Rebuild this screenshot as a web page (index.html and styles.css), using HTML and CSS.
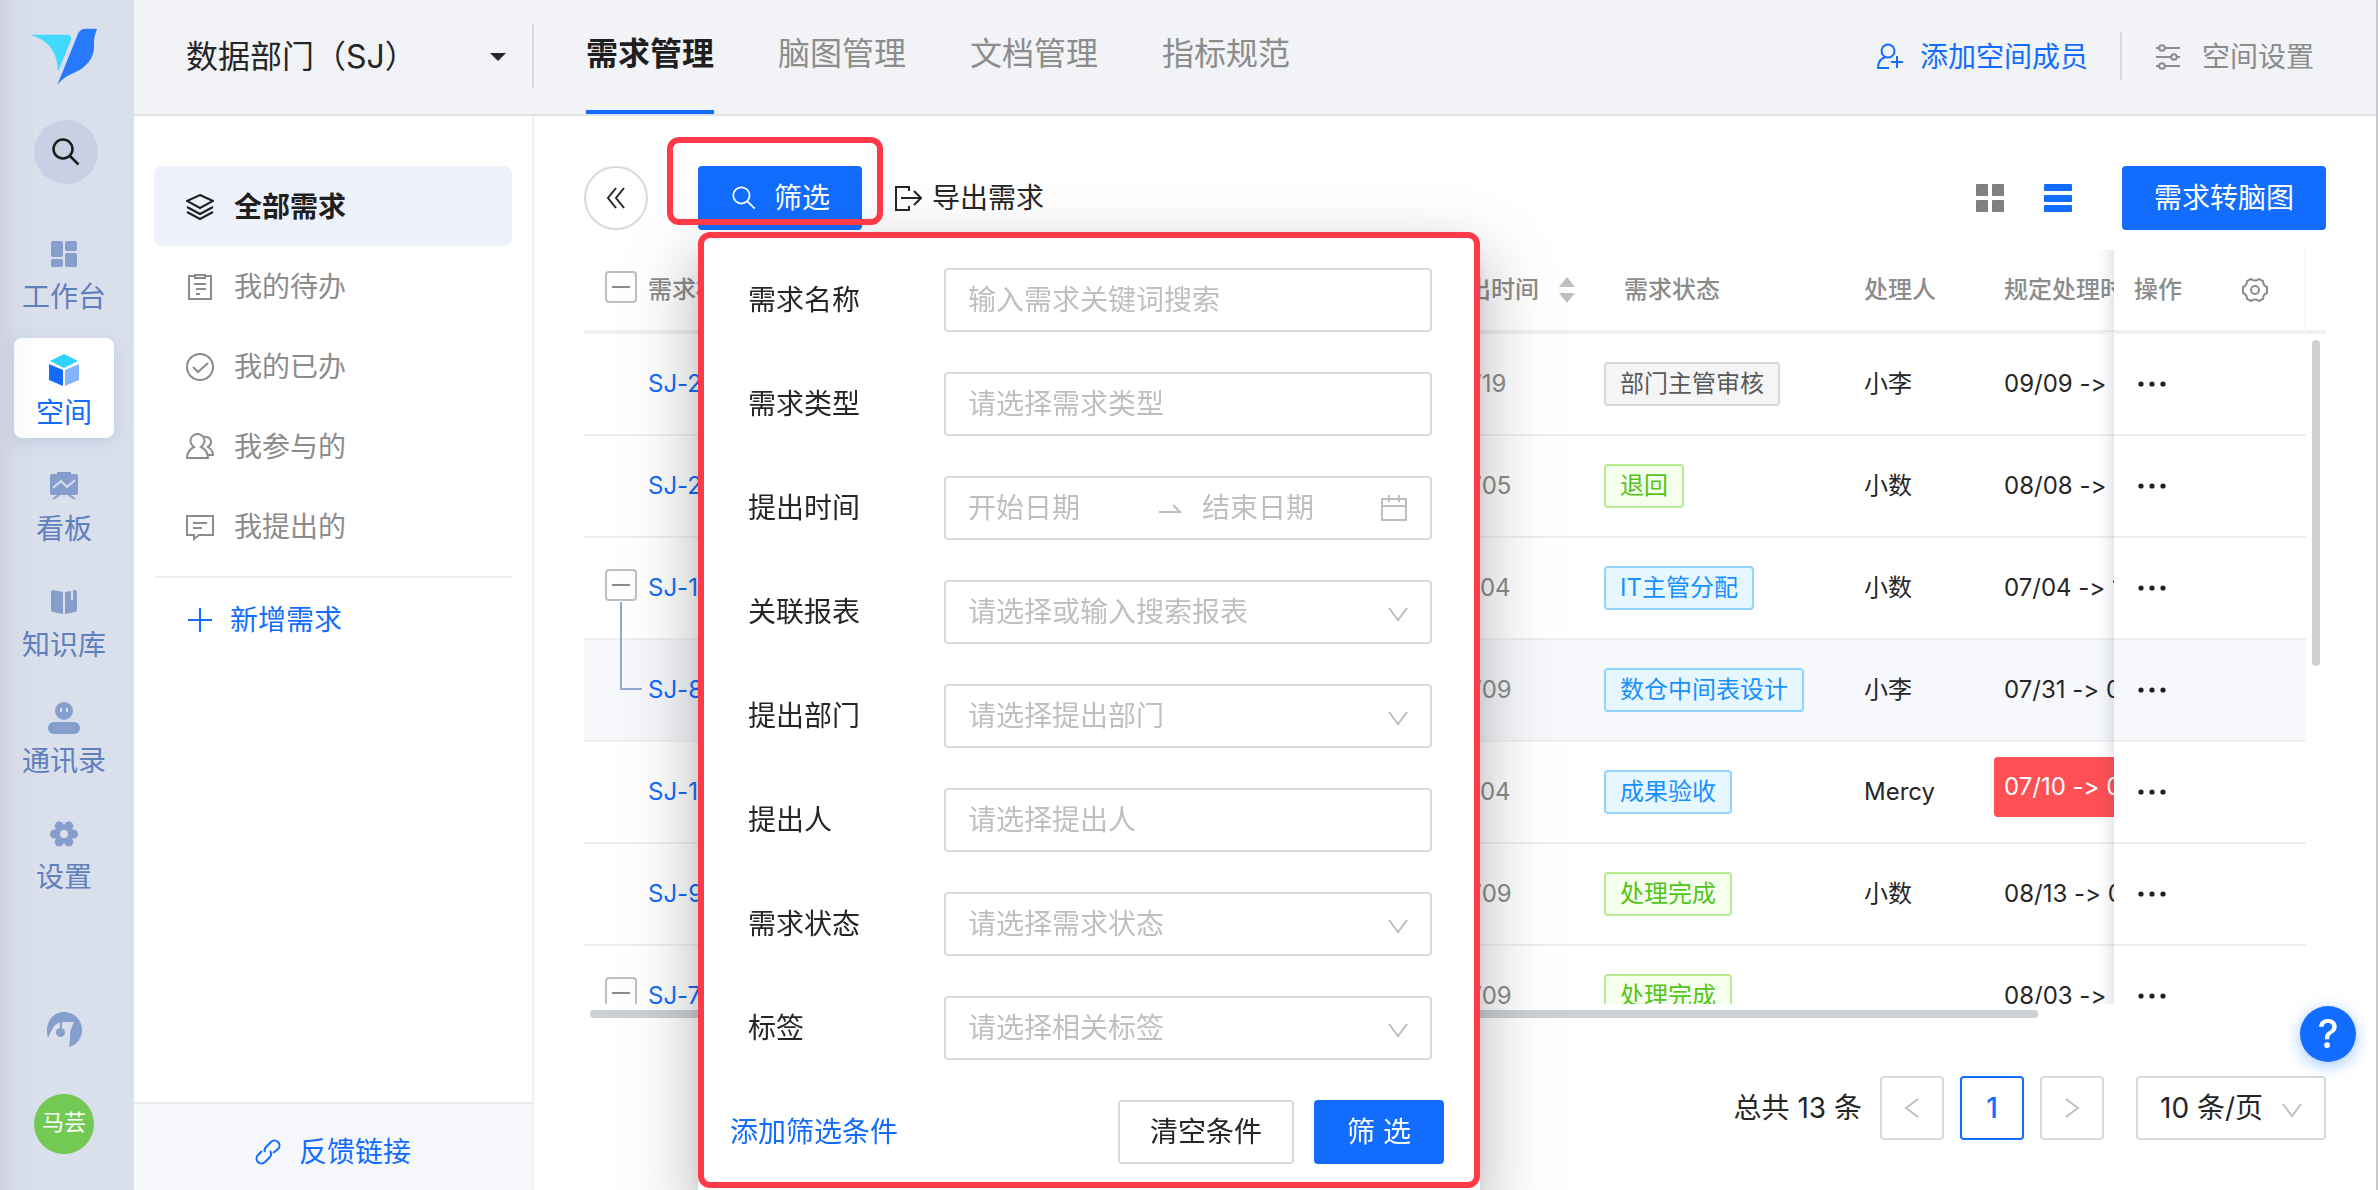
FILE: index.html
```html
<!DOCTYPE html>
<html lang="zh-CN">
<head>
<meta charset="utf-8">
<meta name="viewport" content="width=device-width, initial-scale=1">
<title>需求管理 - 数据部门（SJ）</title>
<link rel="stylesheet" href="styles.css">
</head>
<body>
<svg class="sprite" aria-hidden="true">
  <symbol id="i-chevron" viewBox="0 0 24 24"><path d="M3 6l9 12 9-12" fill="none" stroke="currentColor" stroke-width="2"/></symbol>
  <symbol id="i-search" viewBox="0 0 28 28"><g fill="none" stroke="currentColor"><circle cx="11" cy="11" r="9.500"/><path d="M18 18l8.500 8.500"/></g></symbol>
  <symbol id="i-dots" viewBox="0 0 28 8"><g fill="currentColor"><circle cx="3" cy="4" r="2.600"/><circle cx="14" cy="4" r="2.600"/><circle cx="25" cy="4" r="2.600"/></g></symbol>
</svg>
<div class="app">
  <aside class="rail">
    <svg class="logo" viewBox="0 0 70 58"><path d="M0 6h38c4 0 5 3 4 6L29 44C28 22 18 11 0 6z" fill="#41d9fe"/><path d="M69 0c-4 12-3 12-3 18 0 12-8 22-20 27-8 3-13 7-18 13L49 6c2-4 4-6 9-6z" fill="#277afe"/></svg>
    <button class="rail-search" aria-label="搜索"><svg width="28" height="28" stroke-width="2.500"><use href="#i-search"/></svg></button>
    <nav class="rail-nav">
      <a href="#"><svg viewBox="0 0 32 32"><g fill="currentColor"><rect x="3" y="3" width="12" height="16" rx="2"/><rect x="3" y="21" width="12" height="8" rx="2"/><rect x="17" y="3" width="12" height="10" rx="2"/><rect x="17" y="15" width="12" height="14" rx="2"/></g></svg><span>工作台</span></a>
      <a href="#" class="active"><svg viewBox="0 0 32 32"><path d="M16 0l14 7-14 7L2 7z" fill="#2fd3fe"/><path d="M1 10l14 6v16L1 26z" fill="#126dff"/><path d="M31 10l-14 6v16l14-6z" fill="#84b3ff"/></svg><span>空间</span></a>
      <a href="#"><svg viewBox="0 0 32 32"><path d="M4 4h5V2h14v2h5a2 2 0 0 1 2 2v17a2 2 0 0 1-2 2H4a2 2 0 0 1-2-2V6a2 2 0 0 1 2-2z" fill="currentColor"/><path d="M5 18l8-7 6 6 8-7" fill="none" stroke="#dadfec" stroke-width="2"/><path d="M11 25l-6 4M21 25l6 4" stroke="currentColor" stroke-width="2"/></svg><span>看板</span></a>
      <a href="#"><svg viewBox="0 0 32 32"><path d="M3 6c0-1 1-2 2-2l10 2v22L5 26c-1 0-2-1-2-2zM17 6l6-1v9h2V4l2 0c1 0 2 1 2 2v18c0 1-1 2-2 2l-10 2z" fill="currentColor"/></svg><span>知识库</span></a>
      <a href="#"><svg viewBox="0 0 32 32"><circle cx="16" cy="9" r="9" fill="currentColor"/><path d="M13 6v4M19 6v4" stroke="#dadfec" stroke-width="2"/><rect x="0" y="20" width="32" height="12" rx="6" fill="currentColor"/></svg><span>通讯录</span></a>
      <a href="#"><svg viewBox="0 0 32 32"><g fill="currentColor"><circle cx="6.500" cy="16" r="4.500"/><circle cx="25.500" cy="16" r="4.500"/><circle cx="11.200" cy="8" r="4.500"/><circle cx="20.800" cy="8" r="4.500"/><circle cx="11.200" cy="24" r="4.500"/><circle cx="20.800" cy="24" r="4.500"/><circle cx="16" cy="16" r="9.500"/></g><circle cx="16" cy="16" r="4" fill="#dadfec"/></svg><span>设置</span></a>
    </nav>
    <div class="rail-foot">
      <button class="support" aria-label="客服"><svg width="36" height="36" viewBox="0 0 36 36"><path d="M2 26C-2 12 6 0 18 0c10 0 18 8 18 18 0 8-5 15-13 17 1-5 1-7 1-11 0-6 2-9 4-14H17C8 10 6 18 2 26z" fill="currentColor"/><path d="M15 9v8" stroke="currentColor" stroke-width="2"/><circle cx="14.500" cy="20.500" r="4.500" fill="currentColor"/></svg></button>
      <button class="avatar">马芸</button>
    </div>
  </aside>

  <div class="shell">
    <header class="top">
      <button class="workspace"><span>数据部门（SJ）</span><svg width="16" height="8" viewBox="0 0 16 8"><path d="M0 0h16L8 8z" fill="currentColor"/></svg></button>
      <nav class="tabs">
        <a href="#" class="active">需求管理</a><a href="#">脑图管理</a><a href="#">文档管理</a><a href="#">指标规范</a>
      </nav>
      <div class="top-actions">
        <a href="#" class="add-member"><svg width="28" height="28" viewBox="0 0 28 28"><g fill="none" stroke="currentColor" stroke-width="2"><circle cx="12" cy="8" r="6.500"/><path d="M13 25H2c0-6 3-10 8-11M15 19h12M21 13v12"/></g></svg>添加空间成员</a>
        <a href="#" class="space-set"><svg width="28" height="28" viewBox="0 0 28 28"><g fill="none" stroke="currentColor" stroke-width="2"><path d="M2 5h3M11 5h15M2 14h15M23 14h3M2 23h3M11 23h15"/><circle cx="8" cy="5" r="2.800"/><circle cx="20" cy="14" r="2.800"/><circle cx="8" cy="23" r="2.800"/></g></svg>空间设置</a>
      </div>
    </header>

    <div class="body">
      <aside class="panel">
        <nav class="menu">
          <a href="#" class="active"><svg viewBox="0 0 28 28"><path d="M14 2l13 6-13 7L1 8zM1 14l13 7 13-7M1 19l13 7 13-7"/></svg>全部需求</a>
          <a href="#"><svg viewBox="0 0 28 28"><path d="M9 3H3v23h22V3h-6M9 2h10v3H9zM8 11h12M10 16h10M10 21h4"/></svg>我的待办</a>
          <a href="#"><svg viewBox="0 0 28 28"><circle cx="14" cy="14" r="13"/><path d="M7 14l5 5 10-9"/></svg>我的已办</a>
          <a href="#"><svg viewBox="0 0 28 28"><path d="M8 14a7 7 0 1 1 7 0c4 2 7 6 7 11H1c0-5 3-9 7-11zM17 4c4-1 8 1 8 5 0 2-1 4-3 5 3 2 5 5 5 8h-5"/></svg>我参与的</a>
          <a href="#"><svg viewBox="0 0 28 28"><path d="M1 3h26v19H13l-5 4v-4H1zM7 10h14M7 15h9"/></svg>我提出的</a>
        </nav>
        <button class="new-item"><svg width="28" height="28" viewBox="0 0 28 28"><path d="M14 2v24M2 14h24" stroke="currentColor" stroke-width="2"/></svg>新增需求</button>
        <a href="#" class="feedback"><svg width="26" height="26" viewBox="0 0 26 26"><g fill="none" stroke="currentColor" stroke-width="2"><path d="M10 13c-1-2 0-4 1-5l5-5c2-2 5-2 7 0s2 5 0 7l-5 4"/><path d="M15 12c2 2 1 5 0 6l-5 5c-2 2-5 2-7 0s-2-5 0-7l4-4"/></g></svg>反馈链接</a>
      </aside>

      <main class="main">
        <div class="toolbar">
          <button class="collapse" aria-label="收起"><svg width="20" height="24" viewBox="0 0 20 24"><path d="M10 2L2 12l8 10M18 2l-8 10 8 10" fill="none" stroke="currentColor" stroke-width="2"/></svg></button>
          <div class="filter">
            <button class="btn primary search-btn"><svg width="24" height="24" stroke-width="2"><use href="#i-search"/></svg>筛选</button>
            <div class="mark mark-button"></div>
            <form class="popup">
              <div class="field"><label for="f1">需求名称</label><input id="f1" class="ctl" placeholder="输入需求关键词搜索"></div>
              <div class="field"><label for="f2">需求类型</label><input id="f2" class="ctl" placeholder="请选择需求类型"></div>
              <div class="field"><label for="f3">提出时间</label><div class="ctl range"><input id="f3" placeholder="开始日期"><svg width="24" height="24" viewBox="0 0 24 24"><path d="M1 16h21l-7-7" fill="none" stroke="currentColor" stroke-width="2"/></svg><input aria-label="结束日期" placeholder="结束日期"><svg width="28" height="28" viewBox="0 0 28 28"><path d="M2 5h24v21H2zM2 12h24M9 1v7M19 1v7" fill="none" stroke="currentColor" stroke-width="2"/></svg></div></div>
              <div class="field"><label for="f4">关联报表</label><div class="pick"><select id="f4" class="ctl"><option>请选择或输入搜索报表</option></select><svg><use href="#i-chevron"/></svg></div></div>
              <div class="field"><label for="f5">提出部门</label><div class="pick"><select id="f5" class="ctl"><option>请选择提出部门</option></select><svg><use href="#i-chevron"/></svg></div></div>
              <div class="field"><label for="f6">提出人</label><input id="f6" class="ctl" placeholder="请选择提出人"></div>
              <div class="field"><label for="f7">需求状态</label><div class="pick"><select id="f7" class="ctl"><option>请选择需求状态</option></select><svg><use href="#i-chevron"/></svg></div></div>
              <div class="field"><label for="f8">标签</label><div class="pick"><select id="f8" class="ctl"><option>请选择相关标签</option></select><svg><use href="#i-chevron"/></svg></div></div>
              <div class="popup-foot"><a href="#">添加筛选条件</a><button type="reset" class="btn">清空条件</button><button type="submit" class="btn primary">筛 选</button></div>
              <div class="mark mark-popup"></div>
            </form>
          </div>
          <button class="export"><svg width="28" height="28" viewBox="0 0 28 28"><path d="M15 7V3H2v23h13v-4M7 14h19M20 7l7 7-7 7" fill="none" stroke="currentColor" stroke-width="2"/></svg>导出需求</button>
          <div class="views">
            <button aria-label="卡片视图"><svg width="28" height="28" viewBox="0 0 28 28"><g fill="currentColor"><rect width="12" height="12" rx="1"/><rect x="16" width="12" height="12" rx="1"/><rect y="16" width="12" height="12" rx="1"/><rect x="16" y="16" width="12" height="12" rx="1"/></g></svg></button>
            <button class="on" aria-label="列表视图"><svg width="28" height="28" viewBox="0 0 28 28"><g fill="currentColor"><rect width="28" height="7" rx="1"/><rect y="11" width="28" height="7" rx="1"/><rect y="21" width="28" height="7" rx="1"/></g></svg></button>
          </div>
          <button class="btn primary">需求转脑图</button>
        </div>

        <div class="table-area">
          <div class="viewport">
            <table>
              <colgroup><col><col class="c-date"><col class="c-state"><col class="c-user"><col class="c-due"><col class="c-act"></colgroup>
              <thead><tr>
                <th><div class="title"><button class="toggle" aria-label="全部收起"></button>需求标题</div></th>
                <th><div class="sort">提出时间<svg width="16" height="26" viewBox="0 0 16 26"><path d="M8 0l8 10H0zM8 26l8-10H0z" fill="#bfbfbf"/></svg></div></th>
                <th>需求状态</th><th>处理人</th><th>规定处理时间</th>
                <th class="act"><div class="act-head">操作<svg width="26" height="26" viewBox="0 0 26 26"><g fill="none" stroke="currentColor" stroke-width="2"><path d="M9 2c2 2 6 2 8 0l4 2c0 3 1 5 4 6v6c-3 1-4 3-4 6l-4 2c-2-2-6-2-8 0l-4-2c0-3-1-5-4-6v-6c3-1 4-3 4-6z"/><circle cx="13" cy="13" r="4"/></g></svg></div></th>
              </tr></thead>
              <tbody>
                <tr><td><div class="title"><a href="#">SJ-28</a></div></td><td class="date">08/19</td><td class="state"><span class="tag">部门主管审核</span></td><td>小李</td><td>09/09 -&gt; 09/16</td><td class="act"><button class="more" aria-label="更多"><svg><use href="#i-dots"/></svg></button></td></tr>
                <tr><td><div class="title"><a href="#">SJ-26</a></div></td><td class="date">08/05</td><td class="state"><span class="tag green">退回</span></td><td>小数</td><td>08/08 -&gt; 08/12</td><td class="act"><button class="more" aria-label="更多"><svg><use href="#i-dots"/></svg></button></td></tr>
                <tr><td><div class="title"><button class="toggle" aria-label="收起"></button><a href="#">SJ-12</a></div></td><td class="date">07/04</td><td class="state"><span class="tag blue">IT主管分配</span></td><td>小数</td><td>07/04 -&gt; 10/31</td><td class="act"><button class="more" aria-label="更多"><svg><use href="#i-dots"/></svg></button></td></tr>
                <tr class="hover"><td class="child"><div class="title"><a href="#">SJ-8</a></div></td><td class="date">06/09</td><td class="state"><span class="tag blue">数仓中间表设计</span></td><td>小李</td><td>07/31 -&gt; 08/05</td><td class="act"><button class="more" aria-label="更多"><svg><use href="#i-dots"/></svg></button></td></tr>
                <tr><td><div class="title"><a href="#">SJ-11</a></div></td><td class="date">07/04</td><td class="state"><span class="tag blue">成果验收</span></td><td>Mercy</td><td class="due"><span class="late">07/10 -&gt; 07/15</span></td><td class="act"><button class="more" aria-label="更多"><svg><use href="#i-dots"/></svg></button></td></tr>
                <tr><td><div class="title"><a href="#">SJ-9</a></div></td><td class="date">06/09</td><td class="state"><span class="tag green">处理完成</span></td><td>小数</td><td>08/13 -&gt; 08/20</td><td class="act"><button class="more" aria-label="更多"><svg><use href="#i-dots"/></svg></button></td></tr>
                <tr><td><div class="title"><button class="toggle" aria-label="收起"></button><a href="#">SJ-7</a></div></td><td class="date">06/09</td><td class="state"><span class="tag green">处理完成</span></td><td></td><td>08/03 -&gt; 08/10</td><td class="act"><button class="more" aria-label="更多"><svg><use href="#i-dots"/></svg></button></td></tr>
              </tbody>
            </table>
          </div>
          <div class="gutter"><div class="gutter-head"></div><div class="v-thumb"></div></div>
        </div>
        <div class="h-track"><div class="h-thumb"></div></div>

        <div class="pager">
          <span class="total">总共 13 条</span>
          <button aria-label="上一页" class="page"><svg class="left"><use href="#i-chevron"/></svg></button>
          <button class="page current">1</button>
          <button aria-label="下一页" class="page"><svg class="right"><use href="#i-chevron"/></svg></button>
          <div class="pick size"><select class="ctl" aria-label="每页条数"><option>10 条/页</option></select><svg><use href="#i-chevron"/></svg></div>
        </div>
      </main>
    </div>
  </div>
  <button class="help" aria-label="帮助">?</button>
</div>
</body>
</html>
```
FILE: styles.css
```css
* { box-sizing: border-box; }
body {
  margin: 0;
  font: 28px/40px Inter, "Noto Sans CJK SC", sans-serif;
  font-variant-ligatures: none;
  color: #262626;
  background: #fff;
}
a { color: inherit; text-decoration: none; }
button, input, select { font: inherit; color: inherit; margin: 0; padding: 0; border: 0; background: none; }
button { cursor: pointer; white-space: nowrap; }
svg { flex: none; display: block; }
.sprite { position: absolute; width: 0; height: 0; }

.app { display: flex; height: 100vh; border-right: 2px solid #c8c9cc; overflow: hidden; }

/* Icon rail */
.rail {
  display: flex; flex-direction: column; align-items: center; flex: none;
  width: 134px; padding: 28px 6px 36px 0;
  background: linear-gradient(90deg, #cfd3df, #d6dbe8 16px, #dadfec 36px);
}
.logo { width: 68px; height: 58px; }
.rail-search {
  display: flex; align-items: center; justify-content: center;
  width: 64px; height: 64px; margin: 34px 0 38px 4px;
  border-radius: 50%; background: #c8d1e4; color: #1a1a1a;
}
.rail-nav { display: flex; flex-direction: column; gap: 16px; }
.rail-nav a {
  display: flex; flex-direction: column; align-items: center; gap: 6px;
  width: 100px; height: 100px; padding-top: 16px; border-radius: 8px;
  color: #869ecb; white-space: nowrap;
}
.rail-nav svg { width: 32px; height: 32px; }
.rail-nav span { color: #5f80bd; line-height: 42px; }
.rail-nav .active { background: linear-gradient(90deg, #fafafb, #fff 24px); box-shadow: 0 4px 16px rgba(120, 150, 190, .25); }
.rail-nav .active span { color: #126dff; }
.rail-foot { display: flex; flex-direction: column; align-items: center; gap: 46px; margin-top: auto; }
.support { color: #869ecb; }
.avatar { width: 60px; height: 60px; border-radius: 50%; background: #72c953; color: #fff; font-size: 22px; line-height: 56px; padding-bottom: 4px; }

/* Header */
.shell { display: flex; flex-direction: column; flex: 1; min-width: 0; }
.top {
  display: flex; flex: none; height: 116px;
  background: #f1f3f7; border-bottom: 2px solid #e1e3e6;
}
.workspace {
  display: flex; align-items: center; justify-content: space-between; flex: none;
  width: 400px; height: 64px; margin-top: 24px; padding: 2px 26px 0 52px;
  border-right: 2px solid #d9dade; font-size: 32px;
}
.tabs { display: flex; gap: 64px; padding-left: 52px; }
.tabs a {
  height: 114px; line-height: 108px; border-bottom: 4px solid transparent;
  font-size: 32px; color: #8c8c8c;
}
.tabs .active { font-weight: 700; color: #1f1f1f; border-color: #126dff; }
.top-actions { display: flex; align-items: center; height: 112px; margin-left: auto; padding-right: 62px; }
.top-actions a { display: flex; align-items: center; height: 48px; padding-top: 2px; }
.top-actions .add-member { gap: 16px; color: #126dff; padding-right: 32px; border-right: 2px solid #d9dade; }
.top-actions .space-set { gap: 20px; color: #8c8c8c; padding-left: 32px; }

/* Side menu */
.body { display: flex; flex: 1; min-height: 0; }
.panel { display: flex; flex-direction: column; flex: none; width: 400px; border-right: 2px solid #f0f0f0; }
.menu { margin: 50px 20px 0; padding-bottom: 10px; border-bottom: 2px solid #f0f0f0; }
.menu a { display: flex; align-items: center; gap: 20px; height: 80px; padding: 2px 0 0 32px; border-radius: 8px; color: #8c8c8c; }
.menu svg { width: 28px; height: 28px; fill: none; stroke: currentColor; stroke-width: 2; }
.menu .active { background: #ecf1fa; color: #1f1f1f; font-weight: 700; }
.new-item { display: flex; align-items: center; gap: 16px; height: 84px; padding-left: 52px; color: #126dff; }
.feedback {
  display: flex; align-items: center; justify-content: center; gap: 18px;
  height: 88px; margin-top: auto; padding-top: 10px;
  background: #f6f8fc; border-top: 2px solid #e6e8ec; color: #126dff;
}

/* Toolbar */
.main { display: flex; flex-direction: column; flex: 1; min-width: 0; padding: 50px; }
.toolbar { display: flex; align-items: center; flex: none; height: 64px; }
.btn {
  display: flex; align-items: center; justify-content: center; gap: 20px;
  height: 64px; padding: 0 30px; border: 2px solid #d9d9d9; border-radius: 4px; background: #fff;
}
.primary { background: #126dff; border-color: #126dff; color: #fff; }
.search-btn { padding: 0 30px 0 32px; gap: 18px; }
.collapse {
  display: flex; align-items: center; justify-content: center;
  width: 64px; height: 64px; border: 2px solid #d9d9d9; border-radius: 50%;
}
.filter { position: relative; z-index: 2; margin-left: 50px; }
.export { display: flex; align-items: center; gap: 10px; margin-left: 32px; }
.views { display: flex; gap: 40px; margin: 0 50px 0 auto; color: #808080; }
.views .on { color: #126dff; }

/* Filter popup */
.mark { position: absolute; border: 6px solid #ff3a48; border-radius: 12px; pointer-events: none; }
.mark-button { left: -31px; top: -29px; width: 216px; height: 88px; z-index: 1; }
.mark-popup { inset: 0 0 8px; }
.popup {
  position: absolute; left: 0; top: 66px; width: 782px; padding: 36px 36px 32px 50px;
  display: flex; flex-direction: column; gap: 40px; background: #fff; border-radius: 12px 12px 0 0;
  box-shadow: 0 12px 24px -16px rgba(0, 0, 0, .4), 0 24px 64px rgba(0, 0, 0, .22), 0 36px 80px 32px rgba(0, 0, 0, .05);
}
.field { display: flex; align-items: center; padding-right: 12px; }
.field label { width: 196px; }
.ctl { flex: 1; min-width: 0; width: 100%; height: 64px; padding: 0 22px; border: 2px solid #d9d9d9; border-radius: 4px; background: #fff; }
.ctl::placeholder, .range input::placeholder { color: #bfbfbf; opacity: 1; }
.range { display: flex; align-items: center; color: #bfbfbf; }
.range input { flex: 1; min-width: 0; }
.range input:first-child { flex: 0 0 190px; }
.range svg + input { margin-left: 20px; }
.pick { position: relative; flex: 1; }
.pick select { display: block; appearance: none; color: #bfbfbf; }
.pick svg { position: absolute; right: 22px; top: 22px; width: 24px; height: 24px; color: #bfbfbf; pointer-events: none; }
.popup-foot { display: flex; gap: 20px; margin-left: -18px; }
.popup-foot a { margin-right: auto; line-height: 64px; color: #126dff; }
.popup-foot .btn { padding: 0 30px; }
.popup-foot .primary { width: 130px; }

/* Table */
.table-area { display: flex; flex: 1; min-height: 0; margin-top: 20px; }
.viewport { flex: 1; min-width: 0; overflow: hidden; }
table { width: calc(100% + 170px); table-layout: fixed; border-collapse: separate; border-spacing: 0; font-size: 24px; }
.c-date { width: 181px; }
.c-state { width: 240px; }
.c-user { width: 140px; }
.c-due { width: 300px; }
.c-act { width: 192px; }
th { height: 84px; padding: 0 20px; border-bottom: 4px solid #f0f0f0; text-align: left; font-weight: 500; color: #8c8c8c; white-space: nowrap; }
td { position: relative; height: 102px; padding: 0 20px; border-bottom: 2px solid #f0f0f0; white-space: nowrap; }
.hover td { background: #f6f8fc; }
.title { display: flex; align-items: center; padding-left: 44px; }
.title a { color: #126dff; }
.toggle { position: relative; width: 32px; height: 32px; margin: 0 11px 6px -43px; border: 2px solid #bfbfbf; border-radius: 4px; }
.toggle::after { content: ""; display: block; width: 18px; height: 2px; margin: auto; background: #8c8c8c; }
.child::before {
  content: ""; position: absolute; left: 36px; top: -38px; width: 20px; height: 86px;
  border-left: 2px solid #93a9d3; border-bottom: 2px solid #93a9d3;
}
.sort { display: flex; align-items: center; gap: 20px; }
.date { color: #8c8c8c; }
.state { padding-left: 0; }
.tag { display: inline-block; height: 44px; padding: 0 14px; border: 2px solid #d9d9d9; border-radius: 4px; background: #f5f5f5; line-height: 40px; color: #595959; }
.green { color: #52c41a; background: #f6ffed; border-color: #b7eb8f; }
.blue { color: #1890ff; background: #e6f7ff; border-color: #91d5ff; }
.due { padding-left: 10px; }
.late { display: block; height: 60px; margin-bottom: 10px; padding-left: 10px; border-radius: 4px; background: #ff5055; line-height: 60px; color: #fff; }
.act { position: sticky; right: 0; z-index: 1; background: #fff; }
.act::before { content: ""; position: absolute; left: -18px; top: 0; bottom: -2px; width: 18px; background: linear-gradient(90deg, transparent, rgba(30, 40, 80, .03) 50%, rgba(30, 40, 80, .1)); }
.act-head { display: flex; align-items: center; justify-content: space-between; padding-right: 16px; }
th.act { border-right: 2px solid #f7f7f7; }
.more { display: block; margin-left: 4px; color: #1f1f1f; }
.more svg { width: 28px; height: 8px; }
.gutter { width: 20px; }
.gutter-head { height: 84px; border-bottom: 4px solid #f0f0f0; }
.v-thumb { width: 8px; height: 326px; margin: 6px 0 0 6px; border-radius: 4px; background: #cdd1d4; }
.h-track { flex: none; margin-top: 6px; padding: 0 288px 0 6px; }
.h-thumb { height: 8px; border-radius: 4px; background: #cdd1d4; }

/* Pagination */
.pager { display: flex; align-items: center; justify-content: flex-end; gap: 16px; flex: none; margin-top: 58px; }
.page { display: flex; align-items: center; justify-content: center; width: 64px; height: 64px; border: 2px solid #d9d9d9; border-radius: 4px; color: #bfbfbf; }
.page svg { width: 24px; height: 24px; }
.left { transform: rotate(90deg); }
.right { transform: rotate(-90deg); }
.current { border-color: #126dff; color: #126dff; font-weight: 500; }
.total { margin-right: 2px; }
.size { flex: none; width: 190px; margin-left: 16px; }
.size select { color: #262626; }

.help {
  position: fixed; right: 22px; bottom: 128px; z-index: 3; width: 56px; height: 56px; border-radius: 50%;
  background: #126dff; color: #fff; font-size: 40px; font-weight: 500; box-shadow: 0 4px 16px rgba(18, 109, 255, .4);
}
```
